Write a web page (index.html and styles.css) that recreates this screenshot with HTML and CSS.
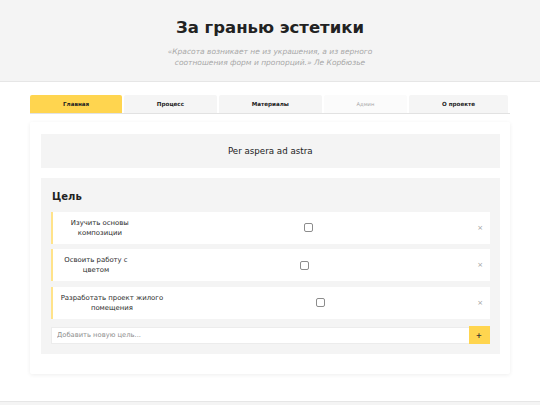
FILE: index.html
```html
<!DOCTYPE html>
<html lang="ru">
<head>
<meta charset="utf-8">
<title>За гранью эстетики</title>
<link rel="stylesheet" href="styles.css">
</head>
<body>
<header class="site-header">
  <h1 class="site-title">За гранью эстетики</h1>
  <p class="site-quote">«Красота возникает не из украшения, а из верного соотношения форм и пропорций.» Ле Корбюзье</p>
</header>

<nav class="tabs">
  <button class="tab tab--active">Главная</button>
  <button class="tab">Процесс</button>
  <button class="tab">Материалы</button>
  <button class="tab tab--muted">Админ</button>
  <button class="tab">О проекте</button>
</nav>

<main class="card">
  <div class="motto">Per aspera ad astra</div>
  <section class="goals">
    <h2 class="goals-title">Цель</h2>
    <ul class="goal-list">
      <li class="goal">
        <span class="goal-text">Изучить основы композиции</span>
        <span class="goal-check"><input class="goal-box" type="checkbox"></span>
        <button class="goal-remove">×</button>
      </li>
      <li class="goal">
        <span class="goal-text">Освоить работу с цветом</span>
        <span class="goal-check"><input class="goal-box" type="checkbox"></span>
        <button class="goal-remove">×</button>
      </li>
      <li class="goal">
        <span class="goal-text">Разработать проект жилого помещения</span>
        <span class="goal-check"><input class="goal-box" type="checkbox"></span>
        <button class="goal-remove">×</button>
      </li>
    </ul>
    <form class="goal-add">
      <input class="goal-input" type="text" placeholder="Добавить новую цель...">
      <button class="goal-add-btn" type="button">+</button>
    </form>
  </section>
</main>

<footer class="site-footer"></footer>
</body>
</html>
```

FILE: styles.css
```css
* {
  box-sizing: border-box;
}

html, body {
  margin: 0;
  padding: 0;
  background: #ffffff;
  font-family: "DejaVu Sans", Verdana, sans-serif;
  color: #222222;
}

/* Header */
.site-header {
  background: #f4f4f4;
  border-bottom: 1px solid #e6e6e6;
  padding: 18px 0 12px;
  text-align: center;
}

.site-title {
  margin: 0 0 7.5px;
  font-size: 16.5px;
  line-height: 20px;
  font-weight: bold;
  color: #222222;
}

.site-quote {
  margin: 0 auto;
  max-width: 206px;
  font-size: 7.5px;
  line-height: 11.6px;
  font-style: italic;
  color: #a8a8a8;
}

/* Tabs */
.tabs {
  display: flex;
  margin: 13px 30px 0;
  border-bottom: 1px solid #e2e2e2;
}

.tab {
  flex: 1 1 auto;
  margin-right: 1.7px;
  padding: 0 8px;
  height: 18px;
  line-height: 18px;
  border: none;
  border-radius: 2px 2px 0 0;
  background: #f5f5f5;
  font-family: inherit;
  font-size: 5.6px;
  font-weight: bold;
  color: #222222;
  text-align: center;
}

.tab:last-child {
  margin-right: 2px;
}

.tab--active {
  background: #ffd54f;
}

.tab--muted {
  background: #fbfbfb;
  font-weight: normal;
  font-size: 5.2px;
  color: #a6a6a6;
}

/* Card */
.card {
  display: block;
  margin: 8px 30px 0;
  padding: 12px 10.5px 20px 11px;
  background: #ffffff;
  box-shadow: 0 1px 4px rgba(0, 0, 0, 0.07);
  border-radius: 2px;
}

.motto {
  background: #f4f4f4;
  padding: 11px 0;
  font-size: 8.7px;
  line-height: 12px;
  text-align: center;
  color: #222222;
}

.goals {
  margin-top: 10.5px;
  background: #f4f4f4;
  padding: 11px 10px 10px;
}

.goals-title {
  margin: 2px 0 8.5px 1px;
  font-size: 10px;
  line-height: 12px;
  font-weight: bold;
  color: #222222;
}

.goal-list {
  list-style: none;
  margin: 0;
  padding: 0;
}

.goal {
  display: flex;
  align-items: center;
  margin-bottom: 5.5px;
  padding: 6px 6.5px 6px 7.5px;
  background: #ffffff;
  border-left: 2px solid #ffe38a;
  min-height: 32px;
}

.goal-text {
  flex: 0 1 auto;
  font-size: 6.9px;
  line-height: 10px;
  text-align: center;
  color: #2a2a2a;
}

.goal-check {
  flex: 1 1 106%;
  display: flex;
  justify-content: center;
  align-items: center;
}

.goal-box {
  -webkit-appearance: none;
  appearance: none;
  margin: 0;
  width: 9px;
  height: 9px;
  border: 1px solid #8c8c8c;
  border-radius: 2px;
  background: #ffffff;
}

.goal-remove {
  flex: none;
  padding: 0;
  border: none;
  background: transparent;
  font-family: inherit;
  font-size: 7px;
  line-height: 10px;
  color: #a0a0a0;
}

.goal-add {
  display: flex;
  margin: 7.5px 0 0;
  height: 18px;
}

.goal-input {
  flex: 1 1 auto;
  min-width: 0;
  height: 17.5px;
  margin: 0.5px 0 0;
  padding: 0 5px;
  border: 1px solid #ececec;
  border-right: none;
  background: #ffffff;
  font-family: inherit;
  font-size: 6.75px;
  color: #333333;
}

.goal-input::placeholder {
  color: #8f8f8f;
}

.goal-add-btn {
  flex: none;
  width: 21px;
  height: 18px;
  padding: 0;
  border: none;
  background: #ffd54f;
  font-family: inherit;
  font-size: 7.5px;
  font-weight: bold;
  color: #333333;
}

/* Footer */
.site-footer {
  margin-top: 27px;
  height: 40px;
  background: #f4f4f4;
  border-top: 1px solid #e6e6e6;
}
```
